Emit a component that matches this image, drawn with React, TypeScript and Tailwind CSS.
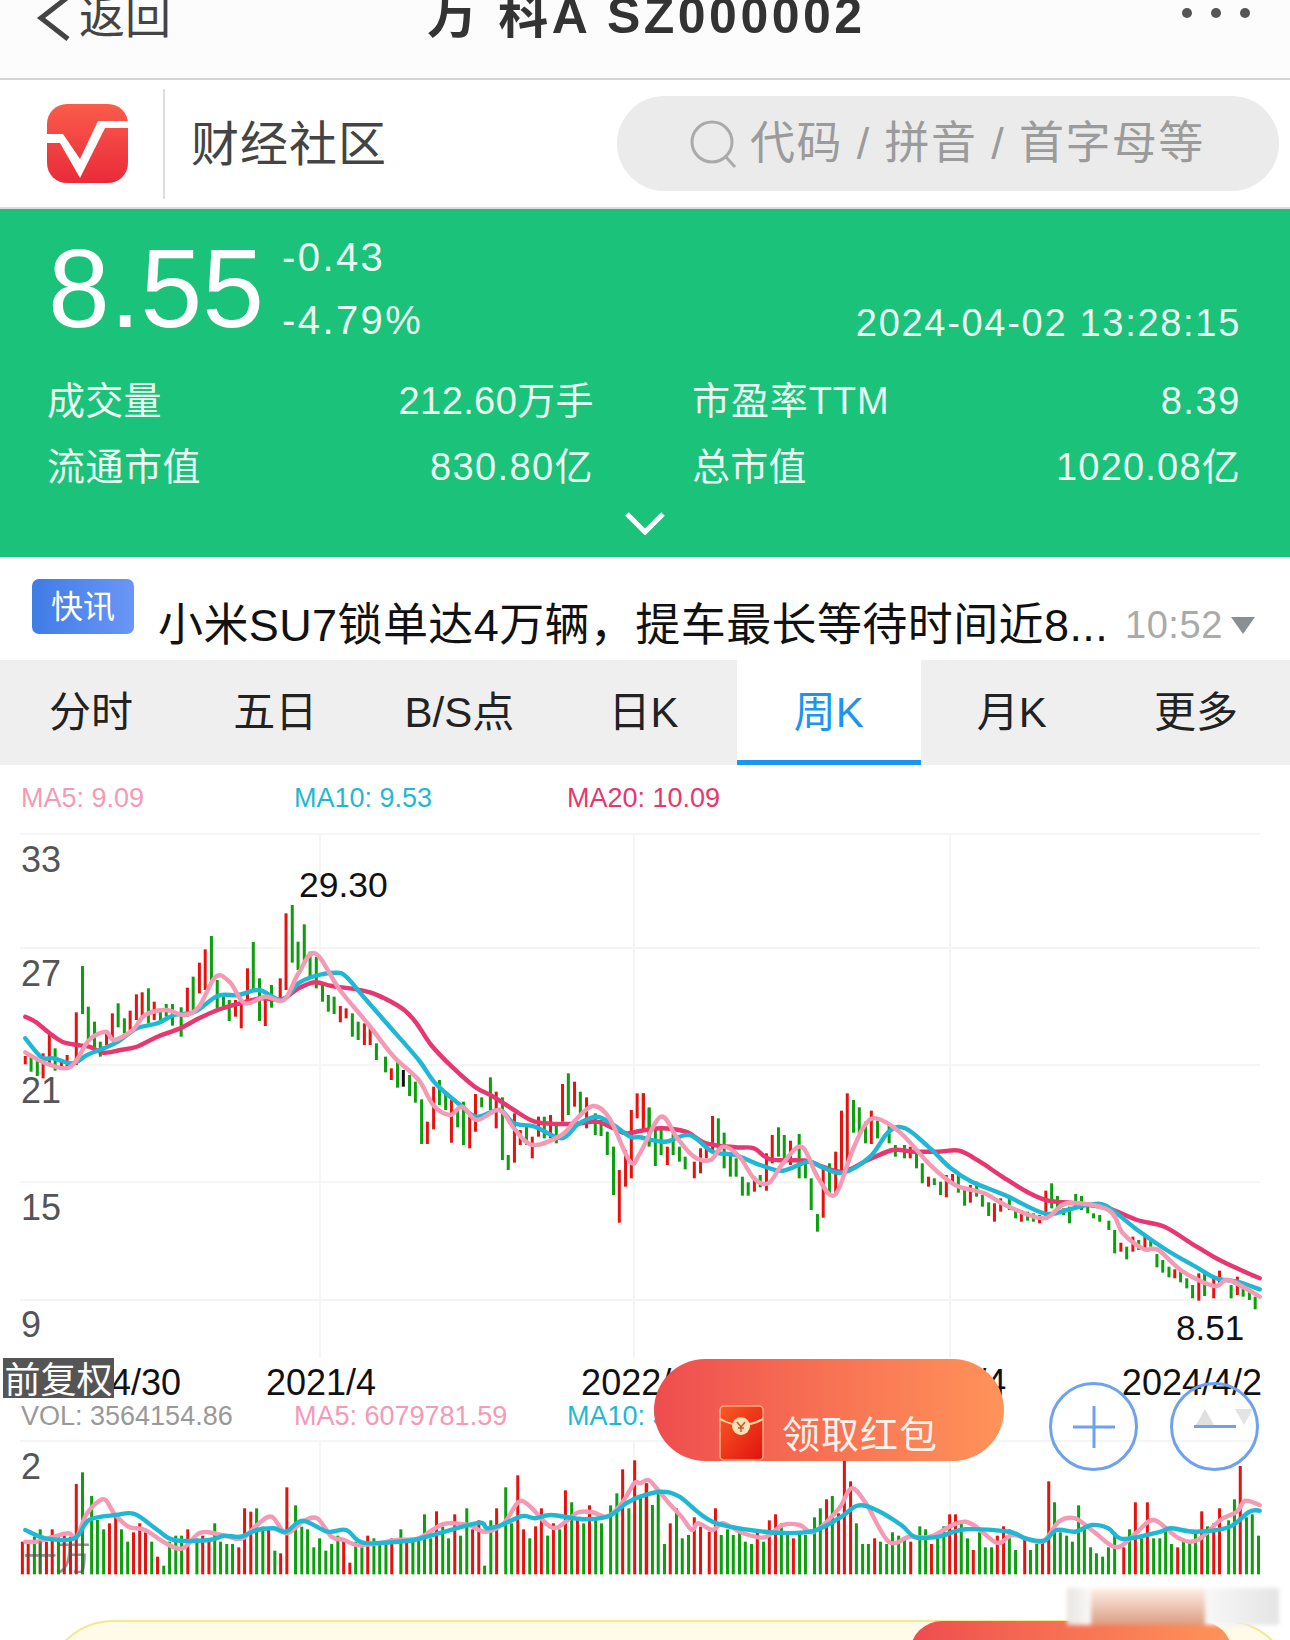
type Bar = { x: number; top: number; bottom: number; color: string };

const RED = "#e6120e";
const GREEN = "#0b9f0d";
const BLACK = "#111111";
const SCALE_X = 1568 / 650;

// values are read off the reference: x position, colour, top, bottom
const candlesLeft =
  "61r708-733 75g710-755 90g715-768 104r700-775 119r640-735 133g685-752 148r725-750 162r705-750 184r577-735 199g438-582 213g560-660 228g605-690 242g665-710 257r635-675 271r580-655 285g550-622 300g595-640 314r572-630 329r523-600 343r517-590 358g505-610 372r545-600 387g570-600 401g552-590 416g552-617 437g562-650 452r503-590 466g470-570 481r428-520 495r388-510 510g348-480 524g480-565 539g530-560 553g540-603 568r540-590 582r540-625 597r445-540 611g366-510 626g475-603 640r530-618 655g495-563 676r475-535 690r280-510 705g255-428 719g365-450 734g313-430 748g395-470 763g410-505 778g490-545 792g525-575 806g530-582 821r558-607 835r565-595 850g580-650 864g605-660 879r610-675 893r620-675 908g670-720 930g710-757 944r745-780 959g720-803 973k750-800 988g765-828 1002g785-848 1017g838-972 1031r905-972 1046r800-928 1060g780-855 1075g815-870 1089r840-968 1104g870-922 1118g845-975 1133r890-985 1147r822-935 1162g832-862 1183g772-870 1197r815-925 1212g832-1020 1226g1005-1050 1241r880-1028 1255r930-975 1270g920-975 1284r950-1015 1299r890-950 1313g890-955 1328r885-955 1342g910-970 1357r792-905 1371g760-885 1386r785-860 1400g815-885 1415r832-925 1436g880-945 1450g900-948 1465g935-1005 1480g980-1125 1494r1050-1208 1509r990-1100 1523r870-1075 1537r820-895 1552r820-900 1566g865-970";

const candlesRight =
  "8r130-240 22g172-290 37g230-348 51g230-315 66r290-345 80g250-315 95g290-335 109g320-358 131r335-385 146r295-370 160r295-325 175r198-300 189g205-300 203g248-355 218g310-380 232g325-380 247g380-437 261g397-437 276r380-425 290g375-412 305r310-422 319r255-340 334g232-320 348g255-325 363r272-345 384g252-385 399g335-385 413g385-480 428g492-545 442r355-503 457g340-430 472r305-435 486r182-365 500r130-355 515g150-248 529g172-250 544g215-280 558r182-282 573g212-265 601g220-280 616g285-320 638g285-325 652r290-325 667g305-355 681g340-400 696r380-410 710g385-405 725g395-435 739r375-442 754r372-402 768g375-428 783g410-467 797r405-458 812g395-440 826g435-470 841g457-498 855r460-515 870r445-485 891g445-480 906g475-505 920r480-515 935g485-512 949g490-515 964r495-520 979r422-510 993g400-475 1007g438-480 1022g475-495 1036g470-520 1051g432-475 1065g438-480 1080g470-490 1094g490-505 1109g495-515 1131g512-540 1145g540-610 1160r578-605 1174g590-628 1189r560-605 1203g570-600 1218r558-600 1232g570-590 1247g612-652 1261g630-668 1276g650-682 1290r658-685 1304g665-697 1319g685-715 1333g705-745 1348r670-752 1362g668-738 1384r680-745 1398r662-705 1426g705-745 1441r680-735 1455g715-740 1470g725-750 1484g740-778";

const volumeLeft =
  "54r605 68r610 83g590 97g568 112r605 126r568 141g590 155r580 170r590 184r432 199g397 221g468 235g540 250g568 264r550 279r530 293g568 308g605 322r577 337r550 351r577 366g605 380r650 395g677 409g605 424g587 438g587 453r568 475g595 489r587 504r605 518g550 532g605 547g612 561g612 576r622 590r505 605r515 619g505 634g560 648r570 663g632 677r640 692r442 713g496 728g560 742g568 757g622 771g595 786g632 800g612 815g587 829r595 844r668 858g605 873g622 887r587 902g595 916g612 931g612 945r595 967g568 981r605 996g605 1010g600 1024g523 1039g595 1053r514 1068g560 1082g595 1097r523 1111g587 1126g505 1140r568 1155r541 1169g677 1184g541 1198r505 1220g442 1234g550 1249r406 1263r568 1278g595 1292r559 1306r505 1321g587 1335r550 1350g568 1364r451 1379g487 1393r540 1408g550 1422r496 1437g532 1451g550 1473g496 1488g460 1502r388 1517g505 1531r361 1545g470 1560r430";

const volumeRight =
  "15r430 30g495 44g460 59g612 73r550 88g505 102g595 117g585 131r532 146r560 167r575 182r505 196g585 211g568 225g585 240g577 254g605 269g612 283r577 298g605 312r541 327r523 341g550 356g577 370r595 385g577 399g585 421g532 435g505 450r478 464g468 479r520 493r362 508r424 522g550 537g612 551g612 566r595 580g605 595g612 609g577 624g587 638g595 653r605 675g559 689g568 703r612 718g595 733g559 747r523 761r523 775g541 790g595 804r630 819g577 833g622 848g622 862r587 877r559 891g568 906g630 928r595 942g630 957g612 971r605 986r424 1000g487 1014g577 1029g587 1043g605 1058g496 1072g568 1087g622 1101g640 1116g650 1130g622 1145g577 1167r622 1181g568 1195r487 1210g595 1224r487 1239g595 1254g595 1268g568 1282g612 1297r622 1311g605 1326g605 1340g577 1355r514 1369g559 1384r550 1398r505 1420g541 1434g478 1448r378 1463g532 1477g523 1492g587";

const ma20Left = "61,590 85,605 120,640 150,665 185,675 215,680 250,698 290,690 330,680 380,650 435,625 480,595 530,568 580,550 630,535 680,538 720,505 760,487 800,498 860,508 900,520 940,543 975,570 1005,610 1040,675 1090,740 1145,800 1190,830 1240,870 1290,905 1350,912 1400,910 1440,905 1480,925 1510,940 1568,930";
const ma20Right = "0,243 50,235 110,245 160,280 230,292 275,295 315,328 400,332 440,350 490,365 550,330 610,300 660,305 720,305 770,302 820,335 880,385 940,430 985,452 1050,460 1130,475 1200,510 1265,530 1330,580 1390,625 1440,655 1495,685";
const ma10Left = "61,655 100,712 130,715 175,730 210,705 250,685 285,665 330,625 380,610 420,585 470,575 525,528 575,525 625,510 680,540 720,490 760,468 810,458 835,470 880,535 940,620 1010,720 1050,790 1110,855 1150,890 1205,870 1240,910 1290,920 1355,955 1395,912 1440,890 1480,915 1520,950 1568,945";
const ma10Right = "0,262 60,275 120,255 175,305 230,315 290,345 345,362 405,335 440,352 490,368 555,320 600,245 640,235 700,295 750,355 800,395 880,435 975,490 1030,480 1080,465 1125,468 1200,540 1270,600 1340,650 1390,685 1440,695 1495,718";
const ma5Left = "61,697 110,730 160,745 185,720 215,660 255,635 275,660 320,630 350,585 400,570 445,585 480,560 520,470 555,487 590,550 640,530 685,540 720,460 760,400 820,510 890,615 950,710 1010,780 1045,855 1085,885 1115,860 1150,900 1205,870 1240,925 1285,975 1355,945 1385,905 1430,858 1470,895 1520,1025 1568,960";
const ma5Right = "0,310 50,200 90,265 130,320 170,330 200,290 240,320 275,385 310,400 345,340 390,290 430,385 470,435 510,310 540,230 570,205 630,250 700,345 760,405 830,430 890,470 975,505 1030,460 1130,480 1165,550 1215,597 1250,600 1310,665 1385,708 1420,690 1495,740";

const volMa5Left = "61,605 90,605 130,590 165,580 185,590 210,520 250,478 275,520 310,560 350,570 400,610 440,625 480,580 510,578 550,590 585,595 620,555 655,530 690,580 730,545 765,535 800,590 830,600 860,615 900,612 960,600 1010,595 1070,552 1130,555 1170,575 1215,550 1250,487 1275,495 1330,562 1365,545 1395,517 1430,517 1465,530 1500,490 1530,430 1568,420";
const volMa5Right = "0,430 20,420 40,445 70,490 100,530 125,570 140,550 175,570 200,550 250,580 300,592 345,555 385,555 420,575 480,505 510,445 545,490 600,605 650,590 700,590 785,545 860,608 900,585 970,605 1010,545 1050,535 1095,575 1150,622 1200,575 1240,540 1300,595 1345,600 1400,540 1440,515 1460,482 1495,495";
const volMa10Left = "61,570 110,595 180,595 215,540 280,525 325,522 380,570 420,600 505,600 540,587 580,590 620,570 660,565 690,575 730,542 790,575 835,570 875,608 960,605 1010,597 1100,565 1160,548 1175,565 1210,555 1260,528 1290,535 1330,525 1410,538 1470,527 1510,490 1568,465";
const volMa10Right = "0,470 50,455 95,470 175,545 300,575 410,575 480,535 525,497 570,510 630,555 665,592 720,590 785,568 890,575 930,595 975,602 1005,570 1050,575 1090,555 1130,565 1165,597 1250,577 1280,565 1340,575 1420,562 1470,515 1495,512";

function colorOf(code: string) {
  if (code === "r") return RED;
  if (code === "g") return GREEN;
  return BLACK;
}

function parseCandles(data: string, x0: number, y0: number): Bar[] {
  return data.split(" ").map((item) => {
    const m = item.match(/^(\d+)([rgk])(\d+)-(\d+)$/)!;
    return {
      x: x0 + Number(m[1]) / SCALE_X,
      color: colorOf(m[2]),
      top: y0 + Number(m[3]) / 3,
      bottom: y0 + Number(m[4]) / 3,
    };
  });
}

function parseVolume(data: string, x0: number, y0: number): Bar[] {
  return data.split(" ").map((item) => {
    const m = item.match(/^(\d+)([rgk])(\d+)$/)!;
    return {
      x: x0 + Number(m[1]) / SCALE_X,
      color: colorOf(m[2]),
      top: y0 + Number(m[3]) / 3,
      bottom: y0 + 703 / 3,
    };
  });
}

// joins the two read-off halves and rounds the corners (catmull-rom to bezier)
function line(left: string, right: string, yLeft: number, yRight: number) {
  const a = left.split(" ").map((p) => {
    const [x, y] = p.split(",").map(Number);
    return [x / SCALE_X, yLeft + y / 3];
  });
  const b = right.split(" ").map((p) => {
    const [x, y] = p.split(",").map(Number);
    return [640 + x / SCALE_X, yRight + y / 3];
  });
  const pts = [...a.slice(0, -1), ...b];
  let d = `M${pts[0][0].toFixed(1)} ${pts[0][1].toFixed(1)}`;
  for (let i = 0; i < pts.length - 1; i++) {
    const p0 = pts[Math.max(i - 1, 0)];
    const p1 = pts[i];
    const p2 = pts[i + 1];
    const p3 = pts[Math.min(i + 2, pts.length - 1)];
    const c1x = p1[0] + (p2[0] - p0[0]) / 6;
    const c1y = p1[1] + (p2[1] - p0[1]) / 6;
    const c2x = p2[0] - (p3[0] - p1[0]) / 6;
    const c2y = p2[1] - (p3[1] - p1[1]) / 6;
    d += ` C${c1x.toFixed(1)} ${c1y.toFixed(1)} ${c2x.toFixed(1)} ${c2y.toFixed(1)} ${p2[0].toFixed(1)} ${p2[1].toFixed(1)}`;
  }
  return d;
}

const candles = [...parseCandles(candlesLeft, 0, 820), ...parseCandles(candlesRight, 640, 1050)];
const volumes = [...parseVolume(volumeLeft, 0, 1340), ...parseVolume(volumeRight, 640, 1340)];

const tabs = ["分时", "五日", "B/S点", "日K", "周K", "月K", "更多"];

function Bars({ items }: { items: Bar[] }) {
  return (
    <>
      {items.map((b) => (
        <rect key={b.x} x={b.x - 1.5} y={b.top} width={3} height={b.bottom - b.top} fill={b.color} />
      ))}
    </>
  );
}

function MaLine({ d, color }: { d: string; color: string }) {
  return <path d={d} fill="none" stroke={color} strokeWidth={4.4} strokeLinejoin="round" strokeLinecap="round" />;
}

function Logo() {
  return (
    <svg width="84" height="84" viewBox="0 0 84 84">
      <defs>
        <linearGradient id="logoFill" x1="0" y1="0" x2="0" y2="1">
          <stop offset="0" stopColor="#fa5c4a" />
          <stop offset="1" stopColor="#ea2a3a" />
        </linearGradient>
      </defs>
      <rect x="1" y="1" width="81" height="79" rx="20" fill="url(#logoFill)" />
      <path d="M1 31 H17 L34 56 L52 18 H82 V25 H59 L34 75 L14 40 H1 Z" fill="#ffffff" />
    </svg>
  );
}

function RedPacket() {
  return (
    <svg width="45" height="56" viewBox="0 0 45 56">
      <defs>
        <linearGradient id="packet" x1="0" y1="0" x2="1" y2="1">
          <stop offset="0" stopColor="#fb5a22" />
          <stop offset="1" stopColor="#e0120f" />
        </linearGradient>
      </defs>
      <rect x="1" y="1" width="43" height="54" rx="4" fill="url(#packet)" stroke="#f9ab84" strokeWidth="1.5" />
      <path d="M1 14 Q22 26 44 14" fill="none" stroke="#fbd9a8" strokeWidth="2" />
      <circle cx="22" cy="21" r="9" fill="#f9e2b4" />
      <path d="M18 17 L22 22 L26 17 M22 22 V27 M19 23 H25" fill="none" stroke="#c9582a" strokeWidth="1.5" />
    </svg>
  );
}

export default function App() {
  return (
    <div className="relative h-[1640px] w-[1290px] overflow-hidden bg-white font-['Liberation_Sans','Noto_Sans_CJK_SC',sans-serif]">
      {/* top bar, cut off by the crop */}
      <div className="relative flex h-[80px] items-start justify-between overflow-hidden border-b-2 border-[#d4d4d4] bg-[#fcfcfc] pl-[36px] pr-[40px]">
        <div className="-mt-[13px] flex items-center gap-[9px] text-[46px] leading-[60px] text-[#444444]">
          <svg width="34" height="46" viewBox="0 0 34 46" className="mt-[2px]">
            <path d="M32 2 L5 23 L32 44" fill="none" stroke="#444444" strokeWidth="5" />
          </svg>
          <span>返回</span>
        </div>
        <div className="-mt-[14px] ml-[6px] -translate-x-[33px] whitespace-nowrap text-[50px] font-bold leading-[60px] tracking-[3.5px] text-[#333333]">万 科A SZ000002</div>
        <div className="mt-[8px] flex gap-[19px]">
          <span className="h-[10px] w-[10px] rounded-full bg-[#555555]" />
          <span className="h-[10px] w-[10px] rounded-full bg-[#555555]" />
          <span className="h-[10px] w-[10px] rounded-full bg-[#555555]" />
        </div>
      </div>

      {/* community header */}
      <div className="flex h-[129px] items-center border-b-2 border-[#dcdcdc]">
        <div className="ml-[46px] mt-[2px]">
          <Logo />
        </div>
        <div className="ml-[33px] h-[110px] w-[2px] bg-[#dddddd]" />
        <div className="ml-[26px] mt-[3px] text-[48px] tracking-[1px] text-[#444444]">财经社区</div>
        <div className="ml-auto mr-[11px] flex h-[95px] w-[662px] items-center rounded-full bg-[#ebebeb] pl-[72px]">
          <svg width="50" height="50" viewBox="0 0 50 50">
            <circle cx="23" cy="23" r="20" fill="none" stroke="#aaaaaa" strokeWidth="3" />
            <path d="M36 37 L46 48" stroke="#aaaaaa" strokeWidth="3" fill="none" />
          </svg>
          <span className="ml-[11px] whitespace-nowrap text-[45px] tracking-[1.4px] text-[#9b9b9b]">代码 / 拼音 / 首字母等</span>
        </div>
      </div>

      {/* quote panel */}
      <div className="relative h-[348px] bg-[#1ac27a] px-[48px] text-[#eafaf2]">
        <div className="flex h-[135px] items-start">
          <div className="mt-[18px] text-[111px] leading-[124px] text-white">8.55</div>
          <div className="ml-[18px] mt-[17px] text-[40px] leading-[63px] tracking-[2.4px]">
            <div>-0.43</div>
            <div>-4.79%</div>
          </div>
          <div className="ml-auto mr-[1px] mt-[90px] text-[38px] leading-[48px] tracking-[1.7px]">2024-04-02 13:28:15</div>
        </div>
        <div className="-ml-[1px] mt-[35px] grid grid-cols-[547px_549px] gap-x-[98px] gap-y-[22px] text-[38px] leading-[44px]">
          <div className="flex justify-between">
            <span className="tracking-[0.3px]">成交量</span>
            <span className="tracking-[0.4px]">212.60万手</span>
          </div>
          <div className="flex justify-between">
            <span className="tracking-[0.9px]">市盈率TTM</span>
            <span className="tracking-[1.6px]">8.39</span>
          </div>
          <div className="flex justify-between">
            <span className="tracking-[0.5px]">流通市值</span>
            <span className="tracking-[1.4px]">830.80亿</span>
          </div>
          <div className="flex justify-between">
            <span className="tracking-[0.3px]">总市值</span>
            <span className="tracking-[1.2px]">1020.08亿</span>
          </div>
        </div>
        <svg width="40" height="24" viewBox="0 0 40 24" className="absolute bottom-[22px] left-[625px]">
          <path d="M2 3 L20 21 L38 3" fill="none" stroke="#ffffff" strokeWidth="5" />
        </svg>
      </div>

      {/* news ticker */}
      <div className="flex h-[103px] bg-white pl-[32px] pr-[35px]">
        <div className="mt-[22px] flex h-[55px] w-[102px] items-center justify-center rounded-[7px] bg-gradient-to-r from-[#3f7ce6] to-[#6a96f6] text-[32px] text-white">快讯</div>
        <div className="ml-[24px] mt-[36px] whitespace-nowrap text-[45px] leading-[66px] tracking-[0.4px] text-[#111111]">小米SU7锁单达4万辆，提车最长等待时间近8...</div>
        <div className="ml-auto mt-[40px] text-[38px] leading-[56px] tracking-[0.6px] text-[#aaaaaa]">10:52</div>
        <div className="ml-[8px] mt-[60px] h-0 w-0 border-x-[12px] border-t-[17px] border-x-transparent border-t-[#8a8f96]" />
      </div>

      {/* period tabs */}
      <div className="grid h-[105px] grid-cols-7 bg-[#efefef] pr-[1px] text-[42px] text-[#222222]">
        {tabs.map((t) =>
          t === "周K" ? (
            <div key={t} className="flex items-center justify-center border-b-[5px] border-[#1a96f0] bg-white pt-[4px] text-[#1a96f0]">
              {t}
            </div>
          ) : (
            <div key={t} className="flex items-center justify-center pb-[1px] pr-[2px]">
              {t}
            </div>
          ),
        )}
      </div>

      {/* chart */}
      <div className="relative h-[875px] w-full">
        <div className="flex h-[67px] items-center whitespace-nowrap pb-[1px] pl-[21px] text-[27px]">
          <span className="w-[273px] text-[#f59ab5]">MA5: 9.09</span>
          <span className="w-[273px] text-[#1fb8d4]">MA10: 9.53</span>
          <span className="text-[#e8366f]">MA20: 10.09</span>
        </div>

        <svg width="1290" height="526" viewBox="0 832 1290 526" className="block">
          <g stroke="#f5f5f5" strokeWidth="2">
            {[834, 948, 1065, 1182, 1300].map((y) => (
              <line key={y} x1="20" x2="1260" y1={y} y2={y} />
            ))}
            {[320, 634, 950].map((x) => (
              <line key={x} x1={x} x2={x} y1="834" y2="1358" />
            ))}
          </g>
          <Bars items={candles} />
          <MaLine d={line(ma20Left, ma20Right, 820, 1050)} color="#e8366f" />
          <MaLine d={line(ma10Left, ma10Right, 820, 1050)} color="#1fb8d4" />
          <MaLine d={line(ma5Left, ma5Right, 820, 1050)} color="#f59ab5" />
          <g fontSize="36" fill="#555555">
            <text x="21" y="872">33</text>
            <text x="21" y="986">27</text>
            <text x="21" y="1103">21</text>
            <text x="21" y="1220">15</text>
            <text x="21" y="1337">9</text>
          </g>
          <text x="299" y="897" fontSize="35.5" fill="#111111">29.30</text>
          <text x="1176" y="1340" fontSize="35" fill="#111111">8.51</text>
        </svg>

        <div className="flex h-[40px] items-center whitespace-nowrap pr-[28px] pt-[9px] text-[36px] text-[#111111]">
          <span className="w-[181px] overflow-hidden text-right">4/30</span>
          <span className="ml-[85px]">2021/4</span>
          <span className="ml-[205px]">2022/4</span>
          <span className="ml-[205px]">2023/4</span>
          <span className="ml-auto">2024/4/2</span>
        </div>
        <div className="absolute left-[3px] top-[593px] flex h-[40px] w-[111px] items-center justify-center bg-[#555555] pt-[6px] text-[36px] leading-[34px] text-white">前复权</div>

        <div className="flex h-[42px] items-center whitespace-nowrap pb-[6px] pl-[21px] text-[27px]">
          <span className="w-[273px] text-[#999999]">VOL: 3564154.86</span>
          <span className="w-[273px] text-[#f59ab5]">MA5: 6079781.59</span>
          <span className="text-[#1fb8d4]">MA10: 5994233.77</span>
        </div>

        <svg width="1290" height="180" viewBox="0 1440 1290 180" className="block">
          <g stroke="#f5f5f5" strokeWidth="2">
            <line x1="20" x2="1260" y1="1441" y2="1441" />
            {[320, 634, 950].map((x) => (
              <line key={x} x1={x} x2={x} y1="1441" y2="1574" />
            ))}
          </g>
          <Bars items={volumes} />
          <MaLine d={line(volMa5Left, volMa5Right, 1340, 1340)} color="#f59ab5" />
          <MaLine d={line(volMa10Left, volMa10Right, 1340, 1340)} color="#1fb8d4" />
          <text x="21" y="1479" fontSize="36" fill="#555555">2</text>
          <text x="23" y="1570" fontSize="34" fill="#555555" fillOpacity="0.65">十万</text>
        </svg>

        {/* floating controls */}
        <div className="absolute left-[654px] top-[594px] flex h-[102px] w-[350px] items-end rounded-full bg-gradient-to-r from-[#ee4c4e] to-[#ff9359] pl-[65px]">
          <RedPacket />
          <span className="-mb-[2px] ml-[18px] text-[38px] leading-[56px] tracking-[1px] text-[#fff2ea]">领取红包</span>
        </div>
        <div className="absolute left-[1049px] top-[617px] flex h-[89px] w-[89px] items-center justify-center rounded-full border-[3px] border-[#6ea2ee]">
          <svg width="44" height="44" viewBox="0 0 44 44">
            <path d="M1 22 H43 M22 1 V43" stroke="#6ea2ee" strokeWidth="3" />
          </svg>
        </div>
        <div className="absolute left-[1170px] top-[617px] flex h-[89px] w-[89px] items-center justify-center rounded-full border-[3px] border-[#6ea2ee]">
          <div className="absolute left-[23px] top-[24px] h-0 w-0 border-x-[9px] border-b-[16px] border-x-transparent border-b-[#e0e0e0]" />
          <div className="absolute left-[62px] top-[24px] h-0 w-0 border-x-[9px] border-t-[16px] border-x-transparent border-t-[#e4e4e4]" />
          <div className="h-[3px] w-[42px] bg-[#6ea2ee]" />
        </div>
      </div>

      {/* bottom card, cut off by the crop */}
      <div className="absolute left-[44px] top-[1620px] h-[90px] w-[1250px] rounded-t-[70px] border-2 border-[#f6e88f] bg-[#fffbe8]" />
      <div className="absolute left-[910px] top-[1621px] h-[60px] w-[322px] rounded-t-[32px] bg-gradient-to-r from-[#ee4c4e] to-[#ff9359]" />
      {/* blurred watermark */}
      <div className="absolute left-[1067px] top-[1588px] flex h-[37px] w-[212px] blur-[2px]">
        <div className="h-full w-[24px] bg-gradient-to-r from-[#e8e4e2] to-[#fbfaf9]" />
        <div className="h-full w-[114px] bg-gradient-to-b from-[#fdf0ea] to-[#dc9d82]" />
        <div className="h-full w-[74px] bg-gradient-to-r from-[#f8f8f8] to-[#e4e4e4]" />
      </div>
    </div>
  );
}
